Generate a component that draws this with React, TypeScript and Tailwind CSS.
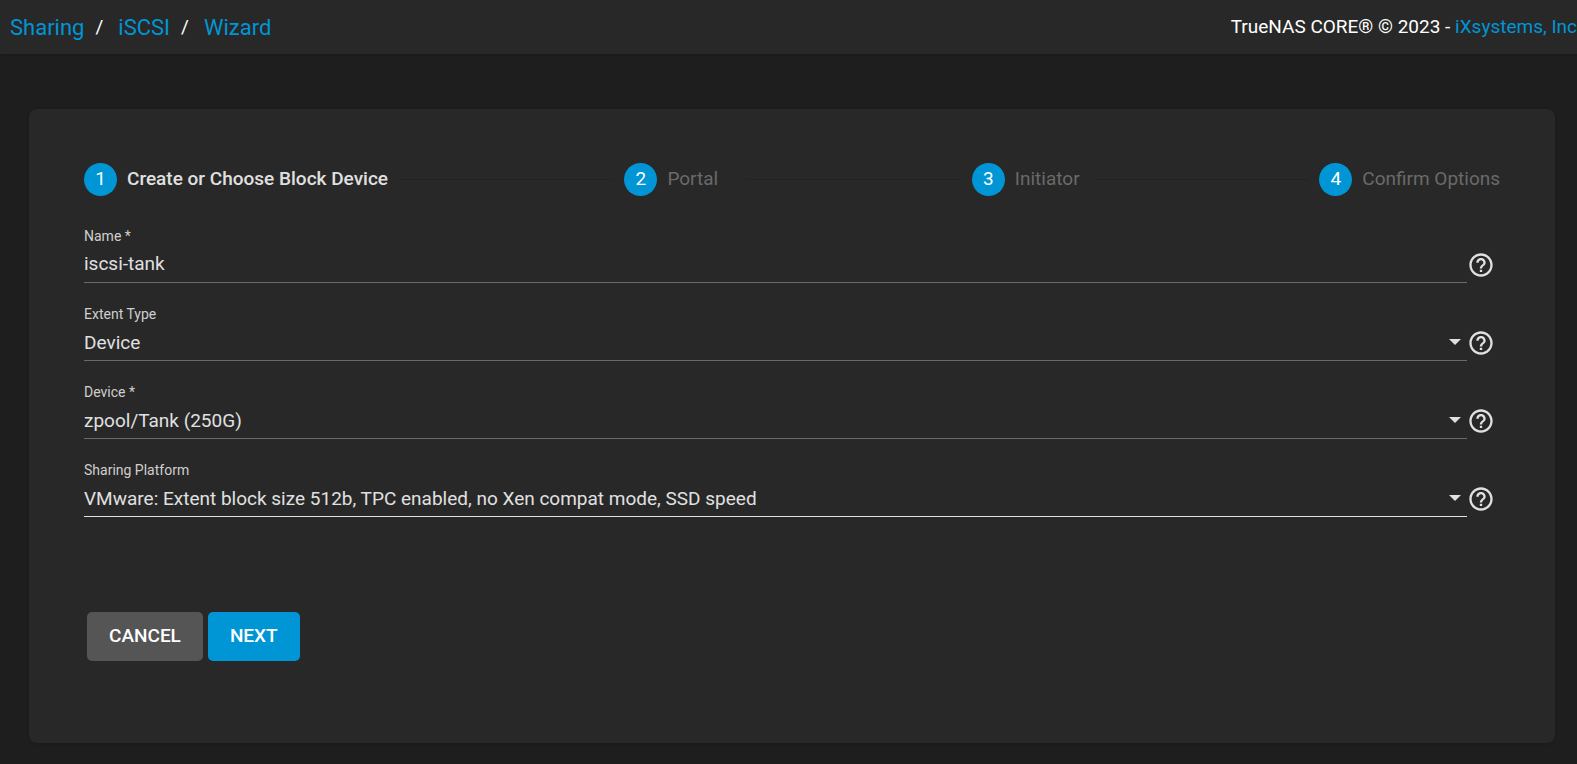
import React, { useState } from "react";
import { MdHelpOutline } from "react-icons/md";

const steps = [
  "Create or Choose Block Device",
  "Portal",
  "Initiator",
  "Confirm Options",
];

const selects = [
  { id: "extent-type", label: "Extent Type", options: ["Device", "File"] },
  { id: "device", label: "Device *", options: ["zpool/Tank (250G)"] },
  {
    id: "platform",
    label: "Sharing Platform",
    options: ["VMware: Extent block size 512b, TPC enabled, no Xen compat mode, SSD speed"],
    active: true,
  },
];

const HelpButton = ({ label }: { label: string }) => (
  <button type="button" aria-label={`Help: ${label}`} className="h-7 w-7 shrink-0">
    <MdHelpOutline className="h-7 w-7" />
  </button>
);

const SelectField = ({ id, label, options, active }: {
  id: string;
  label: string;
  options: string[];
  active?: boolean;
}) => (
  <div>
    <label htmlFor={id} className="block text-sm text-[#cfcfcf]">
      {label}
    </label>
    <div className="mt-px flex items-center">
      <div className="relative grow">
        <select
          id={id}
          className={`block h-9 w-full appearance-none border-b pt-0.5 pr-8 text-[19px] outline-none ${
            active ? "border-[#e0e0e0]" : "border-[#6a6a6a]"
          }`}
        >
          {options.map((option) => (
            <option key={option}>{option}</option>
          ))}
        </select>
        {/* Dropdown arrow */}
        <svg
          viewBox="0 0 12 6"
          className="pointer-events-none absolute top-3.5 right-1.5 h-1.5 w-3 fill-[#e0e0e0]"
        >
          <path d="M0 0h12L6 6z" />
        </svg>
      </div>
      <HelpButton label={label} />
    </div>
  </div>
);

const App = () => {
  const [name, setName] = useState("iscsi-tank");

  return (
    <div className="min-h-screen overflow-x-hidden bg-[#1e1e1e] pb-5 font-['Roboto',sans-serif] text-[#e0e0e0]">
      {/* Breadcrumb bar */}
      <header className="flex h-[54px] items-center justify-between bg-[#282828] pl-[10px] shadow-sm">
        <nav className="flex items-center gap-[11px] text-[22px] text-[#0095d5]">
          <a href="#sharing">Sharing</a>
          <span className="mr-1 text-[19px] text-white">/</span>
          <a href="#iscsi">iSCSI</a>
          <span className="mr-1 text-[19px] text-white">/</span>
          <a href="#wizard">Wizard</a>
        </nav>
        <p className="text-[19px] whitespace-nowrap text-white">
          TrueNAS CORE® © 2023 -{" "}
          <a href="#ixsystems" className="text-[#0095d5]">
            iXsystems, Inc
          </a>
        </p>
      </header>

      <main className="mt-[55px] mr-[22px] ml-[29px] rounded-lg bg-[#282828] px-[55px] pt-[54px] pb-[82px] shadow-sm">
        {/* Stepper */}
        <ol className="flex items-center gap-[11px] text-[19px]">
          {steps.map((step, index) => (
            <React.Fragment key={step}>
              {index > 0 && <li aria-hidden="true" className="h-px grow bg-[#232323]" />}
              <li className="flex items-center gap-2.5">
                <span className="flex h-[33px] w-[33px] items-center justify-center rounded-full bg-[#0095d5] text-white">
                  {index + 1}
                </span>
                <span
                  className={`min-w-[68px] whitespace-nowrap ${
                    index === 0 ? "font-medium" : "text-[#6a6a6a]"
                  }`}
                >
                  {step}
                </span>
              </li>
            </React.Fragment>
          ))}
        </ol>

        <form className="mt-[30px]" onSubmit={(e) => e.preventDefault()}>
          <div className="flex flex-col gap-[21px] pr-[5px]">
            <div>
              <label htmlFor="name" className="block text-sm text-[#cfcfcf]">
                Name *
              </label>
              <div className="mt-px flex items-center">
                <input
                  id="name"
                  type="text"
                  value={name}
                  onChange={(e) => setName(e.target.value)}
                  className="block h-9 grow border-b border-[#6a6a6a] pb-0.5 text-[19px] outline-none"
                />
                <HelpButton label="Name" />
              </div>
            </div>
            {selects.map((field) => (
              <SelectField key={field.id} {...field} />
            ))}
          </div>

          <div className="mt-[95px] flex gap-[5px] pl-[3px] text-[19px] font-medium text-white">
            <button type="button" className="h-[49px] rounded-[5px] bg-[#555555] px-[22px]">
              CANCEL
            </button>
            <button type="submit" className="h-[49px] rounded-[5px] bg-[#0095d5] px-[22px]">
              NEXT
            </button>
          </div>
        </form>
      </main>
    </div>
  );
};

export default App;
